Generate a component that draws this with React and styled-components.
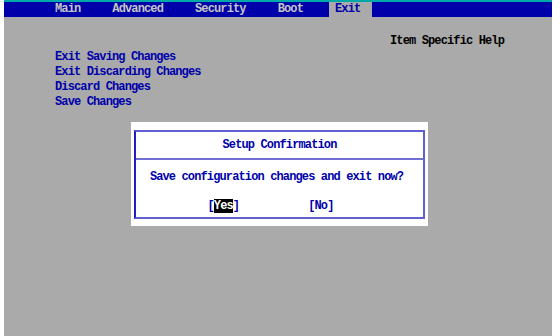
import React from "react";
import styled, { createGlobalStyle } from "styled-components";

const GlobalStyle = createGlobalStyle`
  html, body {
    margin: 0;
    padding: 0;
    background: #ffffff;
  }
  body {
    font-family: "Liberation Mono", "DejaVu Sans Mono", monospace;
    font-weight: bold;
    font-size: 12px;
    letter-spacing: -0.87px;
  }
`;

const tabs = ["Main", "Advanced", "Security", "Boot", "Exit"];
const exitItems = [
  "Exit Saving Changes",
  "Exit Discarding Changes",
  "Discard Changes",
  "Save Changes",
];

const Screen = styled.div`
  position: relative;
  margin-left: 4px;
  width: 548px;
  height: 336px;
  background: #aaaaaa;
  border-top: 2px solid #00a8a8;
  box-sizing: border-box;
  overflow: hidden;
`;

const MenuBar = styled.div`
  display: flex;
  gap: 14px;
  height: 15px;
  padding-left: 45px;
  background: #0000aa;
`;

const Tab = styled.div`
  padding: 0 12px 0 6px;
  line-height: 15px;
  color: ${(p) => (p.$active ? "#0000aa" : "#c4c4c4")};
  background: ${(p) => (p.$active ? "#aaaaaa" : "transparent")};
`;

const Body = styled.div`
  display: flex;
`;

const ItemList = styled.div`
  display: flex;
  flex-direction: column;
  width: 335px;
  padding: 33px 0 0 51px;
`;

const Item = styled.div`
  line-height: 15px;
  color: #0000aa;
`;

const HelpPanel = styled.div`
  padding-top: 17px;
  line-height: 15px;
  color: #000000;
`;

const Dialog = styled.div`
  position: absolute;
  left: 127px;
  top: 120px;
  width: 297px;
  padding: 8px 3px 7px;
  box-sizing: border-box;
  background: #ffffff;
`;

const Frame = styled.div`
  border: 2px solid #6060d0;
  border-left-color: #2020c0;
  color: #0000aa;
`;

const Title = styled.div`
  height: 26px;
  line-height: 27px;
  text-align: center;
  border-bottom: 2px solid #7070d4;
`;

const Question = styled.div`
  padding: 10px 6px 0 0;
  line-height: 15px;
  text-align: center;
`;

const Buttons = styled.div`
  display: flex;
  justify-content: center;
  gap: 69px;
  padding: 14px 18px 3px 0;
  line-height: 15px;
`;

const Highlight = styled.span`
  background: #000000;
  color: #ffffff;
`;

export default function App() {
  return (
    <>
      <GlobalStyle />
      <Screen>
        <MenuBar>
          {tabs.map((t) => (
            <Tab key={t} $active={t === "Exit"}>
              {t}
            </Tab>
          ))}
        </MenuBar>
        <Body>
          <ItemList>
            {exitItems.map((i) => (
              <Item key={i}>{i}</Item>
            ))}
          </ItemList>
          <HelpPanel>Item Specific Help</HelpPanel>
        </Body>
        <Dialog>
          <Frame>
            <Title>Setup Confirmation</Title>
            <Question>Save configuration changes and exit now?</Question>
            <Buttons>
              <span>
                [<Highlight>Yes</Highlight>]
              </span>
              <span>[No]</span>
            </Buttons>
          </Frame>
        </Dialog>
      </Screen>
    </>
  );
}
